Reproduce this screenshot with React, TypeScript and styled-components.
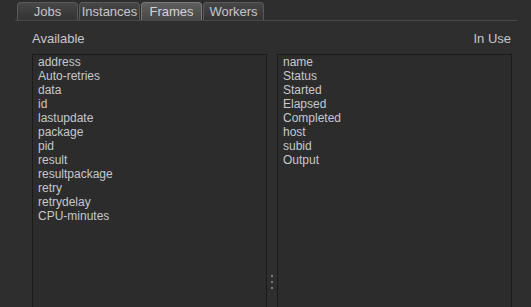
import { createGlobalStyle } from 'styled-components'
import styled from 'styled-components'

const GlobalStyle = createGlobalStyle`
  html, body {
    margin: 0;
    padding: 0;
    background: #2e2e2e;
    overflow: hidden;
  }
  #root {
    height: 100vh;
  }
`

const Window = styled.div`
  height: 100vh;
  display: flex;
  flex-direction: column;
  background: #2e2e2e;
  font-family: 'Liberation Sans', Arial, sans-serif;
  color: #c6c8cc;
`

const TabStrip = styled.div`
  display: flex;
  gap: 1px;
  margin: 0 14px 0 15px;
  padding: 2px 0 0 2px;
  border-bottom: 1px solid #474747;
`

const Tab = styled.div<{ $active?: boolean }>`
  width: 59px;
  height: 17px;
  display: flex;
  align-items: center;
  justify-content: center;
  font-size: 13px;
  line-height: 15px;
  border: 1px solid ${(p) => (p.$active ? '#7a7a7a' : '#595959')};
  border-bottom: none;
  border-radius: 4px 4px 0 0;
  background: ${(p) =>
    p.$active
      ? 'linear-gradient(#5e5e5e, #474747)'
      : 'linear-gradient(#474747, #333333)'};
  color: ${(p) => (p.$active ? '#d2d4d8' : '#c4c6ca')};
`

const Header = styled.div`
  display: flex;
  justify-content: space-between;
  padding: 0 20px 0 32px;
  margin-top: 10px;
  font-size: 13px;
  line-height: 15px;
`

const Panes = styled.div`
  flex: 1;
  display: grid;
  grid-template-columns: 235px 10px 235px;
  margin: 8px 0 0 32px;
  min-height: 0;
`

const List = styled.ul`
  list-style: none;
  margin: 0;
  padding: 0 5px;
  border: 1px solid #1b1b1b;
  border-bottom: none;
  background: #2c2c2c;
  font-size: 12px;
  line-height: 14px;
`

const Item = styled.li`
  white-space: nowrap;
`

const Splitter = styled.div`
  display: flex;
  flex-direction: column;
  align-items: center;
  justify-content: flex-end;
  gap: 4px;
  padding-bottom: 18px;
`

const Grip = styled.span`
  width: 2px;
  height: 2px;
  background: #7c7c7c;
`

const available = [
  'address',
  'Auto-retries',
  'data',
  'id',
  'lastupdate',
  'package',
  'pid',
  'result',
  'resultpackage',
  'retry',
  'retrydelay',
  'CPU-minutes',
]

const inUse = ['name', 'Status', 'Started', 'Elapsed', 'Completed', 'host', 'subid', 'Output']

const tabs = ['Jobs', 'Instances', 'Frames', 'Workers']

export default function App() {
  return (
    <Window>
      <GlobalStyle />
      <TabStrip>
        {tabs.map((t) => (
          <Tab key={t} $active={t === 'Frames'}>
            {t}
          </Tab>
        ))}
      </TabStrip>
      <Header>
        <span>Available</span>
        <span>In Use</span>
      </Header>
      <Panes>
        <List>
          {available.map((f) => (
            <Item key={f}>{f}</Item>
          ))}
        </List>
        <Splitter>
          <Grip />
          <Grip />
          <Grip />
        </Splitter>
        <List>
          {inUse.map((f) => (
            <Item key={f}>{f}</Item>
          ))}
        </List>
      </Panes>
    </Window>
  )
}
